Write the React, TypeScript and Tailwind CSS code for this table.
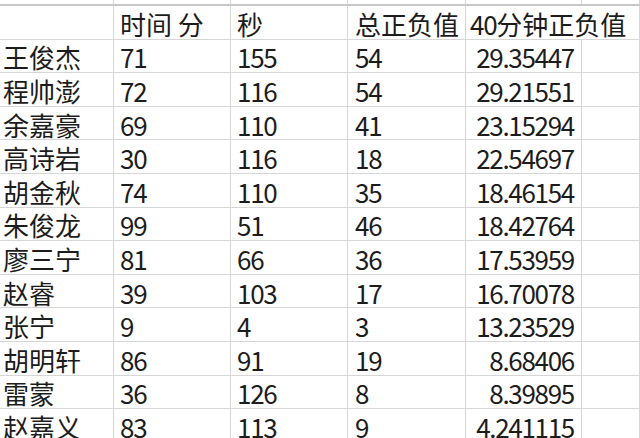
import React from "react";

const rows: [string, string, string, string, string][] = [
  ["王俊杰", "71", "155", "54", "29.35447"],
  ["程帅澎", "72", "116", "54", "29.21551"],
  ["余嘉豪", "69", "110", "41", "23.15294"],
  ["高诗岩", "30", "116", "18", "22.54697"],
  ["胡金秋", "74", "110", "35", "18.46154"],
  ["朱俊龙", "99", "51", "46", "18.42764"],
  ["廖三宁", "81", "66", "36", "17.53959"],
  ["赵睿", "39", "103", "17", "16.70078"],
  ["张宁", "9", "4", "3", "13.23529"],
  ["胡明轩", "86", "91", "19", "8.68406"],
  ["雷蒙", "36", "126", "8", "8.39895"],
  ["赵嘉义", "83", "113", "9", "4.241115"],
];

const grid = "grid grid-cols-[114px_117px_117px_118px_116px_1fr]";
const cell = "border-r border-b border-[#d6d6d6] h-[33.6px] flex items-center whitespace-nowrap pt-[3px]";
const num = "tracking-[-1.3px]";

export default function App() {
  return (
    <div
      className="w-[640px] h-[438px] overflow-hidden bg-white text-[#1c1c1c] text-[26px] leading-none"
      style={{ fontFamily: '"Noto Sans CJK SC", "Noto Sans", sans-serif' }}
    >
      <div className={`${grid} h-[4px]`}>
        {[0, 1, 2, 3, 4, 5].map((i) => (
          <div key={i} className="border-r border-[#d6d6d6]" />
        ))}
      </div>
      <div className="h-[2px] bg-[#c8c8c8]" />
      <div className={grid}>
        <div className={`${cell} h-[32px]`} />
        <div className={`${cell} h-[32px] pl-[6px]`}>时间 分</div>
        <div className={`${cell} h-[32px] pl-[6px]`}>秒</div>
        <div className={`${cell} h-[32px] pl-[7px]`}>总正负值</div>
        <div className={`${cell} h-[32px] pl-[4px] border-r-0 overflow-visible relative z-10`}>
          <span className={num}>40</span>分钟正负值
        </div>
        <div className={`${cell} h-[32px]`} />
        {rows.map((r, i) => (
          <React.Fragment key={i}>
            <div className={`${cell} pl-[3px]`}>{r[0]}</div>
            <div className={`${cell} pl-[6px] ${num}`}>{r[1]}</div>
            <div className={`${cell} pl-[6px] ${num}`}>{r[2]}</div>
            <div className={`${cell} pl-[7px] ${num}`}>{r[3]}</div>
            <div className={`${cell} justify-end pr-[7px] ${num}`}>{r[4]}</div>
            <div className={cell} />
          </React.Fragment>
        ))}
      </div>
    </div>
  );
}
